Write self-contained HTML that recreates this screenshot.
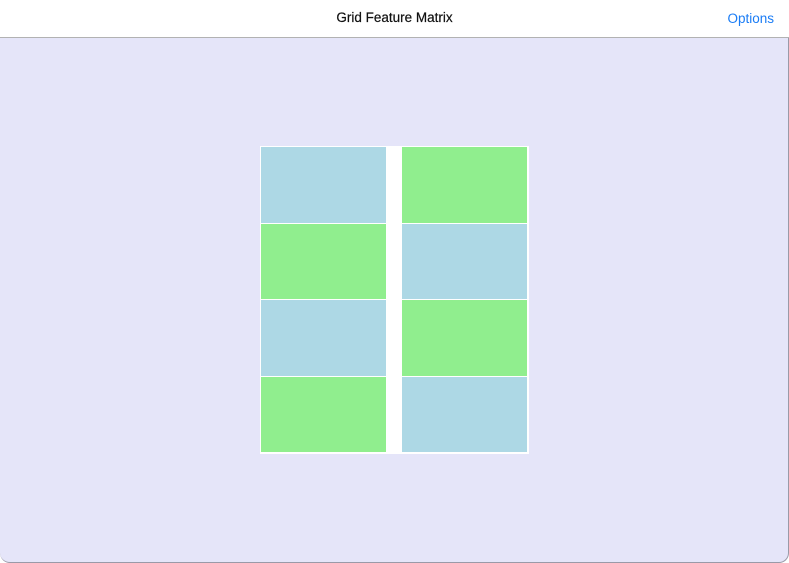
<!DOCTYPE html>
<html><head><style>
html,body{margin:0;padding:0;width:789px;height:563px;overflow:hidden;background:#fff;font-family:"Liberation Sans",sans-serif}
.hdr{position:absolute;left:0;top:0;width:789px;height:37px;background:#fff;border-bottom:1px solid #b2b2b2}
.t{position:absolute;left:0;width:789px;top:10px;text-align:center;font-size:13.5px;color:#111;-webkit-text-stroke:0.2px #111}
.o{position:absolute;right:15px;top:11px;font-size:13.5px;color:#1a7cf5}
.main{position:absolute;left:0;top:38px;width:788px;height:524px;background:#e5e5f9;border-radius:0 0 10px 10px;border-right:1px solid #9a9aa8;border-bottom:1px solid #9a9aa8}
.box{position:absolute;left:260px;top:146px;width:269px;height:308px;background:#fff}
.c{position:absolute;width:125px}
.b{background:#add8e5}.g{background:#90ee8e}
</style></head><body>
<div class="hdr"><div class="t">Grid Feature Matrix</div><div class="o">Options</div></div>
<div class="main"></div>
<div class="box"></div>
<div class="c b" style="left:261px;top:147px;height:76px"></div>
<div class="c g" style="left:261px;top:224px;height:75px"></div>
<div class="c b" style="left:261px;top:300px;height:76px"></div>
<div class="c g" style="left:261px;top:377px;height:75px"></div>
<div class="c g" style="left:402px;top:147px;height:76px"></div>
<div class="c b" style="left:402px;top:224px;height:75px"></div>
<div class="c g" style="left:402px;top:300px;height:76px"></div>
<div class="c b" style="left:402px;top:377px;height:75px"></div>
</body></html>
